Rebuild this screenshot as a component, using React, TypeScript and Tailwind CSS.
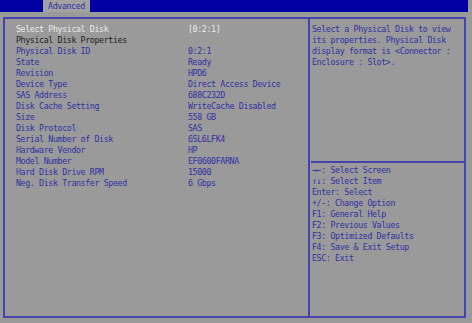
import React from "react";

const rows: [string, string][] = [
  ["Physical Disk ID", "0:2:1"],
  ["State", "Ready"],
  ["Revision", "HPD6"],
  ["Device Type", "Direct Access Device"],
  ["SAS Address", "688C232D"],
  ["Disk Cache Setting", "WriteCache Disabled"],
  ["Size", "558 GB"],
  ["Disk Protocol", "SAS"],
  ["Serial Number of Disk", "6SL6LFK4"],
  ["Hardware Vendor", "HP"],
  ["Model Number", "EF0600FARNA"],
  ["Hard Disk Drive RPM", "15000"],
  ["Neg. Disk Transfer Speed", "6 Gbps"],
];

const help = [
  "Select a Physical Disk to view",
  "its properties. Physical Disk",
  "display format is <Connector :",
  "Enclosure : Slot>.",
];

const keys = [
  "→←: Select Screen",
  "↑↓: Select Item",
  "Enter: Select",
  "+/-: Change Option",
  "F1: General Help",
  "F2: Previous Values",
  "F3: Optimized Defaults",
  "F4: Save & Exit Setup",
  "ESC: Exit",
];

export default function App() {
  return (
    <div
      className="w-[472px] h-[323px] bg-[#9a9a9a] overflow-hidden text-[8.3px] tracking-[-0.38px] leading-[11px] whitespace-pre text-[#3030a4]"
      style={{ fontFamily: '"DejaVu Sans Mono", "Liberation Mono", monospace' }}
    >
      <div className="flex h-[12px] mr-[4px]">
        <div className="w-[43px] bg-[#0000a4]" />
        <div className="w-[47px] flex items-center justify-center bg-[#a2a2a2] text-[#3030a4] leading-[12px]">
          Advanced
        </div>
        <div className="flex-1 bg-[#0000a4]" />
      </div>
      <div className="mt-[5px] ml-[3px] w-[463px] h-[301px] border-2 border-[#4444aa] flex">
        <div className="w-[305px] pl-[11px] pt-[5px] border-r-2 border-[#4444aa]">
          <div className="flex">
            <div className="w-[172px] text-[#ececec]">Select Physical Disk</div>
            <div className="text-[#ececec]">[0:2:1]</div>
          </div>
          <div className="text-[#1c1c1c]">Physical Disk Properties</div>
          {rows.map(([k, v]) => (
            <div key={k} className="flex">
              <div className="w-[172px]">{k}</div>
              <div>{v}</div>
            </div>
          ))}
        </div>
        <div className="flex-1 flex flex-col">
          <div className="h-[142px] pl-[2px] pt-[5px]">
            {help.map((h) => (
              <div key={h}>{h}</div>
            ))}
          </div>
          <div className="ml-[1px] border-t-2 border-[#4444aa]" />
          <div className="pl-[2px] pt-[2px]">
            {keys.map((k) => (
              <div key={k}>{k}</div>
            ))}
          </div>
        </div>
      </div>
    </div>
  );
}
